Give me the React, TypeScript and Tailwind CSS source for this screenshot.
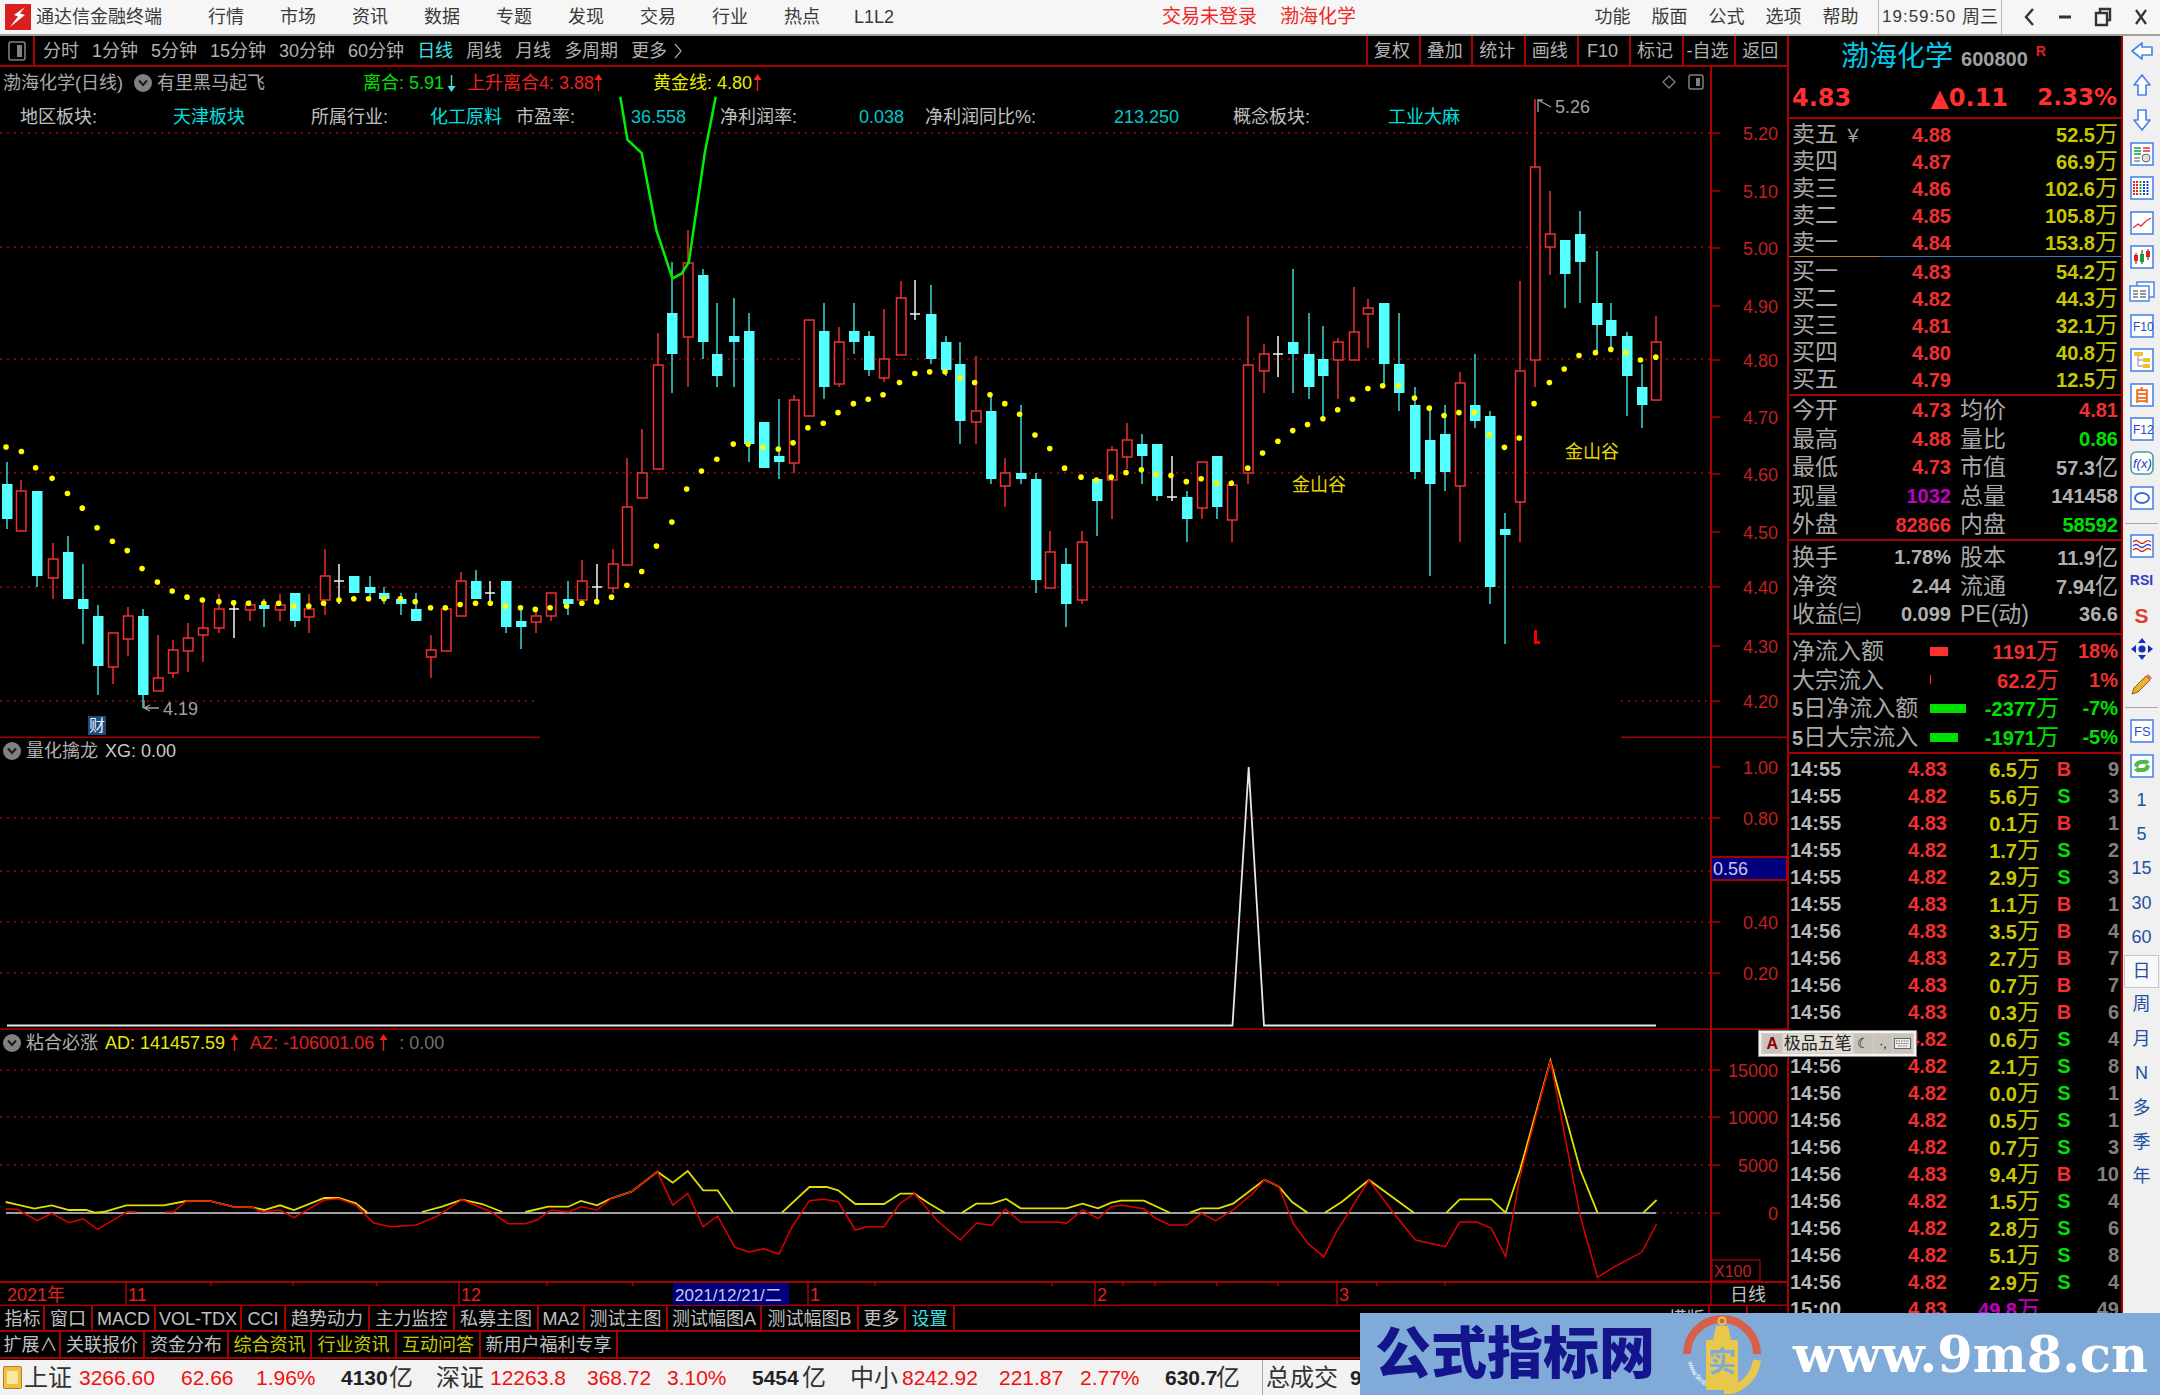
import type { ReactNode } from 'react';

// [x, wick top, body top, body bottom, wick bottom, kind] in crop coordinates
type Candle = [number, number, number, number, number, 'c' | 'r' | 'w'];

const candlesA: Candle[] = [
  [12, 888, 942, 1027, 1052, 'c'], [39, 932, 958, 1055, 1055, 'r'], [67, 957, 957, 1166, 1192, 'c'],
  [97, 1086, 1124, 1170, 1222, 'r'], [124, 1068, 1108, 1222, 1222, 'c'], [152, 1138, 1222, 1247, 1332, 'c'],
  [179, 1237, 1263, 1387, 1457, 'c'], [206, 1307, 1307, 1390, 1431, 'r'], [233, 1241, 1263, 1320, 1361, 'r'],
  [261, 1247, 1263, 1457, 1490, 'c'], [288, 1311, 1417, 1448, 1448, 'r'], [315, 1322, 1348, 1404, 1416, 'r'],
  [343, 1281, 1319, 1349, 1401, 'r'], [370, 1225, 1293, 1310, 1376, 'r'], [400, 1211, 1248, 1294, 1306, 'r'],
  [427, 1225, 1248, 1250, 1317, 'w'], [455, 1225, 1237, 1250, 1276, 'r'], [482, 1222, 1237, 1247, 1291, 'c'],
  [510, 1211, 1237, 1250, 1276, 'r'], [537, 1207, 1207, 1276, 1291, 'c'], [564, 1211, 1248, 1266, 1306, 'r'],
  [592, 1101, 1167, 1225, 1262, 'r'], [619, 1137, 1178, 1180, 1235, 'w'], [646, 1167, 1167, 1207, 1207, 'c'],
  [674, 1167, 1193, 1207, 1225, 'c'], [701, 1193, 1207, 1222, 1235, 'c'], [731, 1207, 1222, 1236, 1262, 'c'],
  [758, 1207, 1248, 1277, 1277, 'c'], [786, 1310, 1347, 1364, 1416, 'r'], [813, 1247, 1247, 1349, 1349, 'r'],
  [840, 1156, 1178, 1265, 1265, 'r'], [868, 1152, 1178, 1222, 1222, 'c'], [894, 1178, 1208, 1210, 1233, 'w'],
  [922, 1178, 1178, 1291, 1306, 'c'], [950, 1240, 1277, 1291, 1346, 'c'], [977, 1241, 1263, 1279, 1306, 'r'],
  [1005, 1208, 1208, 1265, 1276, 'r'], [1035, 1178, 1222, 1236, 1262, 'c'], [1062, 1127, 1178, 1225, 1225, 'r'],
  [1089, 1137, 1193, 1195, 1235, 'w'], [1117, 1101, 1138, 1195, 1207, 'r'], [1144, 877, 998, 1140, 1140, 'r'],
  [1171, 807, 914, 974, 974, 'r'], [1199, 572, 649, 904, 904, 'r'], [1226, 398, 523, 622, 718, 'c'],
  [1254, 318, 399, 581, 703, 'r'], [1281, 414, 428, 593, 634, 'c'], [1308, 497, 622, 677, 703, 'c'],
  [1338, 484, 578, 593, 703, 'c'], [1366, 523, 567, 842, 887, 'c'], [1393, 788, 788, 902, 902, 'c'],
  [1420, 733, 873, 887, 928, 'c'], [1448, 722, 734, 890, 914, 'r'], [1475, 538, 539, 775, 775, 'r'],
  [1502, 497, 567, 703, 733, 'c'], [1530, 557, 594, 695, 703, 'r'], [1557, 497, 567, 593, 622, 'c'],
];

const candlesB: Candle[] = [
  [17, 567, 578, 662, 677, 'c'], [44, 513, 635, 680, 692, 'r'], [74, 443, 485, 625, 625, 'r'],
  [101, 440, 524, 526, 538, 'w'], [129, 454, 524, 634, 648, 'c'], [156, 578, 594, 662, 677, 'c'],
  [183, 594, 648, 787, 842, 'c'], [211, 628, 763, 790, 842, 'r'], [238, 722, 763, 928, 942, 'c'],
  [265, 877, 914, 945, 997, 'r'], [293, 748, 914, 928, 942, 'c'], [320, 914, 928, 1177, 1207, 'c'],
  [347, 1057, 1108, 1195, 1195, 'r'], [375, 1098, 1138, 1236, 1291, 'c'], [405, 1057, 1083, 1224, 1236, 'r'],
  [432, 928, 928, 982, 1067, 'c'], [459, 848, 858, 930, 1027, 'r'], [487, 792, 833, 875, 904, 'r'],
  [514, 818, 844, 872, 942, 'c'], [541, 844, 844, 971, 982, 'c'], [568, 873, 972, 974, 982, 'w'],
  [596, 957, 972, 1027, 1082, 'c'], [623, 888, 888, 1000, 1027, 'r'], [651, 873, 873, 997, 1027, 'c'],
  [678, 932, 944, 1030, 1082, 'r'], [708, 528, 649, 914, 942, 'r'], [736, 597, 623, 665, 718, 'r'],
  [763, 578, 623, 625, 678, 'w'], [790, 414, 594, 622, 718, 'c'], [818, 523, 623, 703, 733, 'c'],
  [845, 553, 634, 677, 787, 'c'], [872, 583, 594, 636, 733, 'r'], [900, 458, 568, 636, 636, 'r'],
  [927, 487, 510, 525, 607, 'r'], [955, 497, 497, 647, 703, 'c'], [982, 523, 648, 718, 762, 'c'],
  [1012, 703, 748, 912, 928, 'c'], [1039, 758, 833, 942, 1167, 'c'], [1066, 748, 818, 912, 957, 'c'],
  [1094, 667, 693, 945, 1082, 'r'], [1121, 622, 748, 787, 803, 'c'], [1149, 763, 774, 1192, 1236, 'c'],
  [1176, 1013, 1052, 1066, 1332, 'c'], [1203, 443, 664, 985, 1082, 'r'], [1231, -3, 165, 636, 703, 'r'],
  [1258, 222, 329, 360, 428, 'r'], [1286, 344, 344, 427, 509, 'c'], [1313, 273, 329, 397, 497, 'c'],
  [1343, 369, 497, 552, 618, 'c'], [1370, 497, 538, 577, 607, 'c'], [1398, 568, 578, 677, 773, 'c'],
  [1425, 648, 703, 747, 803, 'c'], [1452, 528, 594, 735, 735, 'r'],
];

const dotsA = [[11, 850], [39, 861], [65, 901], [95, 927], [123, 964], [150, 1000], [177, 1048], [205, 1081], [232, 1104], [259, 1148], [287, 1181], [314, 1203], [341, 1218], [369, 1225], [399, 1229], [426, 1232], [453, 1233], [481, 1233], [508, 1233], [535, 1240], [563, 1240], [590, 1233], [618, 1225], [645, 1222], [672, 1222], [700, 1222], [730, 1222], [757, 1229], [785, 1244], [812, 1244], [839, 1236], [867, 1233], [894, 1233], [921, 1240], [949, 1244], [976, 1248], [1003, 1244], [1033, 1240], [1061, 1233], [1088, 1229], [1115, 1218], [1143, 1189], [1170, 1155], [1197, 1093], [1225, 1034], [1252, 953], [1279, 909], [1307, 880], [1337, 843], [1364, 843], [1391, 851], [1419, 855], [1446, 840], [1473, 803], [1501, 792], [1528, 766], [1556, 744]];
const dotsB = [[15, 733], [42, 722], [72, 692], [100, 670], [127, 666], [155, 666], [182, 681], [209, 692], [237, 722], [264, 744], [291, 770], [319, 821], [346, 854], [373, 902], [403, 924], [431, 931], [458, 924], [485, 913], [513, 906], [540, 917], [567, 920], [595, 935], [622, 928], [650, 939], [677, 939], [707, 902], [734, 865], [762, 836], [789, 810], [816, 795], [844, 781], [871, 759], [898, 733], [926, 707], [953, 700], [981, 700], [1011, 730], [1038, 755], [1065, 773], [1092, 766], [1120, 766], [1147, 821], [1175, 851], [1202, 828], [1229, 744], [1257, 692], [1284, 659], [1311, 626], [1341, 619], [1369, 611], [1396, 619], [1423, 637], [1451, 630]];

const greenLine = [[1131, -8], [1144, 97], [1170, 130], [1197, 320], [1226, 437], [1243, 425], [1256, 397], [1285, 130], [1305, -8]];

// pane 3 lines, x offset 900 marks the second crop
const yellowA = [
  [[10, 516], [30, 524], [60, 536], [90, 526], [120, 540], [150, 540], [165, 548], [180, 546], [220, 526], [285, 526], [325, 513], [365, 513], [405, 530], [440, 532], [460, 540], [488, 526], [512, 540], [565, 504], [590, 504], [620, 520], [640, 548]],
  [[735, 546], [770, 530], [805, 509], [840, 522], [875, 546]],
  [[915, 546], [955, 530], [990, 530], [1012, 513], [1040, 526], [1065, 505], [1100, 485], [1145, 425], [1172, 458], [1198, 423], [1225, 481], [1250, 481], [1277, 548]],
  [[1362, 548], [1410, 471], [1440, 471], [1460, 481], [1490, 522], [1540, 522], [1568, 491]],
];
const yellowB = [
  [[0, 491], [25, 491], [50, 520], [78, 548]],
  [[108, 548], [133, 521], [160, 521], [185, 507], [210, 535], [290, 535], [318, 521], [345, 535], [368, 518], [385, 512], [425, 512], [470, 548]],
  [[505, 548], [525, 535], [555, 535], [580, 521], [635, 449], [660, 470], [683, 516], [710, 548]],
  [[740, 548], [770, 515], [817, 450], [895, 548]],
  [[952, 548], [975, 508], [1030, 508], [1055, 548], [1080, 420], [1133, 92], [1185, 420], [1215, 548]],
  [[1295, 548], [1318, 510]],
];
const redA = [
  [[10, 536], [30, 538], [65, 572], [90, 550], [120, 578], [145, 566], [170, 598], [205, 562], [222, 545], [238, 546]],
  [[288, 546], [302, 546], [325, 513], [365, 513], [405, 530], [440, 532], [455, 546], [488, 540], [512, 563], [565, 510], [590, 506], [620, 525], [650, 578], [680, 590], [725, 585], [760, 560], [805, 509], [840, 535], [855, 545], [885, 581], [915, 581], [935, 570], [960, 540], [990, 546], [1012, 530], [1040, 540], [1065, 505], [1100, 485], [1145, 425], [1172, 525], [1198, 490], [1225, 590], [1250, 558], [1280, 652], [1305, 666], [1330, 656], [1357, 672], [1380, 590], [1410, 512], [1435, 508], [1460, 515], [1490, 600], [1510, 590], [1540, 590], [1568, 520]],
];
const redB = [[0, 520], [25, 491], [65, 572], [105, 630], [133, 580], [160, 586], [183, 537], [210, 576], [275, 576], [290, 580], [318, 540], [345, 566], [368, 530], [385, 526], [425, 536], [445, 565], [470, 585], [500, 585], [525, 550], [550, 572], [580, 540], [615, 490], [635, 449], [660, 470], [685, 580], [710, 640], [738, 680], [762, 600], [817, 450], [860, 550], [898, 630], [950, 650], [975, 576], [1005, 576], [1030, 595], [1055, 680], [1080, 440], [1133, 92], [1185, 560], [1215, 742], [1245, 710], [1292, 667], [1318, 582]];

const mainX = (x: number, off: number) => off + x / 1.8233;
const mainY = (y: number) => 100 + y / 2.45;
const subX = (x: number, off: number) => off + x / 1.742;
const subY = (y: number) => 1030 + y / 3;
const subPts = (pts: number[][], off: number) => pts.map(([x, y]) => `${subX(x, off).toFixed(1)},${subY(y).toFixed(1)}`).join(' ');

const RED = '#a80000';

function CandleMark({ c, off }: { c: Candle; off: number }) {
  const [x, wt, bt, bb, wb, kind] = c;
  const px = Math.round(mainX(x, off));
  const top = Math.round(mainY(bt));
  const bot = Math.round(mainY(bb));
  const a = Math.round(mainY(wt));
  const b = Math.round(mainY(wb));
  if (kind === 'w') {
    return (
      <g stroke="#f4f4f4" strokeWidth="1.5">
        <line x1={px} x2={px} y1={a} y2={b} />
        <line x1={px - 5} x2={px + 5} y1={top} y2={top} />
      </g>
    );
  }
  if (kind === 'c') {
    return (
      <g>
        <line x1={px} x2={px} y1={a} y2={b} stroke="#3cd8d8" strokeWidth="1.5" />
        <rect x={px - 5} y={top} width="10.5" height={bot - top} fill="#54ffff" />
      </g>
    );
  }
  return (
    <g>
      <line x1={px} x2={px} y1={a} y2={top} stroke="#e83030" strokeWidth="1.5" />
      <line x1={px} x2={px} y1={bot} y2={b} stroke="#e83030" strokeWidth="1.5" />
      <rect x={px - 4.5} y={top} width="9.5" height={bot - top} fill="#000" stroke="#f03030" strokeWidth="1.5" />
    </g>
  );
}

function Grid({ ys, x2 = 1711 }: { ys: number[]; x2?: number }) {
  return (
    <g stroke={RED} strokeWidth="1.5" strokeDasharray="2 5">
      {ys.map((y) => (
        <line key={y} x1="0" x2={x2} y1={y} y2={y} />
      ))}
    </g>
  );
}

function AxisLabels({ items, x = 1778 }: { items: [string, number][]; x?: number }) {
  return (
    <g fill="#c02020" fontSize="18" textAnchor="end">
      {items.map(([t, y]) => (
        <g key={t}>
          <line x1="1711" x2="1720" y1={y} y2={y} stroke={RED} strokeWidth="1.5" />
          <text x={x} y={y + 7}>{t}</text>
        </g>
      ))}
    </g>
  );
}

function Chevron() {
  return (
    <span className="flex h-[18px] w-[18px] items-center justify-center rounded-full bg-[#808080]">
      <svg width="10" height="8" viewBox="0 0 10 8"><path d="M1 1.5 5 6l4-4.5" fill="none" stroke="#1a1a1a" strokeWidth="2" /></svg>
    </span>
  );
}

function Tick({ dir, color }: { dir: 'up' | 'down'; color: string }) {
  return (
    <svg width="9" height="18" viewBox="0 0 9 18" className="flex-none">
      <path d={dir === 'up' ? 'M4.5 17V4' : 'M4.5 1v13'} stroke={color} strokeWidth="1.4" />
      <path d={dir === 'up' ? 'M4.5 0 8.5 6h-8z' : 'M4.5 18 .5 12h8z'} fill={color} />
    </svg>
  );
}

function PriceChart() {
  const axis: [string, number][] = [['5.20', 133], ['5.10', 191], ['5.00', 248], ['4.90', 306], ['4.80', 360], ['4.70', 417], ['4.60', 474], ['4.50', 532], ['4.40', 587], ['4.30', 646], ['4.20', 701]];
  return (
    <div className="relative h-[671px] w-full">
      <svg className="block" width="1787" height="671" viewBox="0 67 1787 671">
        <Grid ys={[133, 247, 359, 473, 587]} />
        <line x1="0" x2="537" y1="701" y2="701" stroke={RED} strokeWidth="1.5" strokeDasharray="2 5" />
        <line x1="1621" x2="1711" y1="701" y2="701" stroke={RED} strokeWidth="1.5" strokeDasharray="2 5" />
        <line x1="1711" x2="1711" y1="67" y2="738" stroke={RED} strokeWidth="2" />
        <AxisLabels items={axis} />
        {candlesA.map((c) => <CandleMark key={`a${c[0]}`} c={c} off={0} />)}
        {candlesB.map((c) => <CandleMark key={`b${c[0]}`} c={c} off={860} />)}
        <g fill="#ffff00">
          {dotsA.map(([x, y]) => <circle key={`a${x}`} cx={mainX(x, 0)} cy={mainY(y)} r="2.8" />)}
          {dotsB.map(([x, y]) => <circle key={`b${x}`} cx={mainX(x, 860)} cy={mainY(y)} r="2.8" />)}
        </g>
        <polyline points={greenLine.map(([x, y]) => `${mainX(x, 0)},${mainY(y)}`).join(' ')} fill="none" stroke="#00f000" strokeWidth="2.5" />
        <path d="M1538 112V100l13 7M1538 100h5" fill="none" stroke="#a0a0a0" strokeWidth="1.3" />
        <text x="1555" y="113" fill="#a0a0a0" fontSize="18">5.26</text>
        <path d="M144 700v8h15M144 708l6-3M144 708l6 3" fill="none" stroke="#a0a0a0" strokeWidth="1.3" />
        <text x="163" y="715" fill="#a0a0a0" fontSize="18">4.19</text>
        <rect x="88" y="716" width="18" height="19" fill="#1a4a80" />
        <text x="89" y="731" fill="#f0f0f0" fontSize="16">财</text>
        <text x="1292" y="491" fill="#e8d800" fontSize="18">金山谷</text>
        <text x="1565" y="458" fill="#e8d800" fontSize="18">金山谷</text>
        <path d="M1534 630h3v11h3v3h-6z" fill="#f00000" />
        <path d="M1669 76l6 6-6 6-6-6z" fill="none" stroke="#808080" strokeWidth="1.3" />
        <rect x="1689" y="75" width="14" height="14" rx="2" fill="none" stroke="#808080" strokeWidth="1.5" />
        <rect x="1696" y="78" width="4" height="8" fill="#808080" />
        <line x1="0" x2="540" y1="737.5" y2="737.5" stroke={RED} strokeWidth="2" />
        <line x1="1621" x2="1787" y1="737.5" y2="737.5" stroke={RED} strokeWidth="2" />
      </svg>

      <div className="absolute left-[3px] top-[4px] flex h-[24px] items-center whitespace-nowrap text-[18px] text-[#a8a8a8]">
        <span className="w-[131px]">渤海化学(日线)</span>
        <Chevron />
        <span className="ml-[5px] w-[206px]">有里黑马起飞</span>
        <span className="w-[84px] text-[#00e000]">离合: 5.91</span>
        <Tick dir="down" color="#40e0e0" />
        <span className="ml-[11px] w-[127px] text-[#f02020]">上升离合4: 3.88</span>
        <Tick dir="up" color="#f02020" />
        <span className="ml-[50px] w-[100px] text-[#e8e800]">黄金线: 4.80</span>
        <Tick dir="up" color="#f02020" />
      </div>

      <div className="absolute left-[20px] top-[38px] flex h-[24px] items-center whitespace-nowrap text-[18px] text-[#c0c0c0]">
        <span className="w-[153px]">地区板块:</span>
        <span className="w-[138px] text-[#00e0e0]">天津板块</span>
        <span className="w-[119px]">所属行业:</span>
        <span className="w-[86px] text-[#00e0e0]">化工原料</span>
        <span className="w-[115px]">市盈率:</span>
        <span className="w-[89px] text-[#00c8c8]">36.558</span>
        <span className="w-[139px]">净利润率:</span>
        <span className="w-[66px] text-[#00c8c8]">0.038</span>
        <span className="w-[189px]">净利润同比%:</span>
        <span className="w-[119px] text-[#00c8c8]">213.250</span>
        <span className="w-[155px]">概念板块:</span>
        <span className="text-[#00e0e0]">工业大麻</span>
      </div>
    </div>
  );
}

function SignalChart() {
  const axis: [string, number][] = [['1.00', 767], ['0.80', 818], ['0.40', 922], ['0.20', 973]];
  return (
    <div className="relative h-[292px] w-full">
      <svg className="block" width="1787" height="292" viewBox="0 738 1787 292">
        <Grid ys={[818, 871, 922, 973]} />
        <line x1="1711" x2="1711" y1="738" y2="1030" stroke={RED} strokeWidth="2" />
        <AxisLabels items={axis} />
        <polyline points="7,1025.5 1232.5,1025.5 1248.7,767 1264,1025.5 1656,1025.5" fill="none" stroke="#e8e8e8" strokeWidth="1.8" />
        <rect x="1711" y="857" width="76" height="23" fill="#00007f" stroke={RED} strokeWidth="2" />
        <text x="1713" y="875" fill="#c8c8e8" fontSize="18">0.56</text>
        <line x1="0" x2="1787" y1="1029.5" y2="1029.5" stroke={RED} strokeWidth="2" />
      </svg>
      <div className="absolute left-[3px] top-[2px] flex h-[22px] items-center gap-[5px] whitespace-nowrap text-[18px] text-[#b0b0b0]">
        <Chevron />
        <span>量化擒龙</span>
        <span className="ml-[2px] text-[#c8c8c8]">XG: 0.00</span>
      </div>
    </div>
  );
}

function OscChart() {
  const axis: [string, number][] = [['15000', 1070], ['10000', 1117], ['5000', 1165], ['0', 1213]];
  return (
    <div className="relative h-[251px] w-full">
      <svg className="block" width="1787" height="251" viewBox="0 1030 1787 251">
        <Grid ys={[1070, 1117, 1165]} />
        <line x1="1656" x2="1711" y1="1213" y2="1213" stroke={RED} strokeWidth="1.5" strokeDasharray="2 5" />
        <line x1="1711" x2="1711" y1="1030" y2="1281" stroke={RED} strokeWidth="2" />
        <AxisLabels items={axis} />
        <rect x="1712" y="1260" width="48" height="21" fill="none" stroke={RED} strokeWidth="1.3" />
        <text x="1714" y="1277" fill="#c02020" fontSize="16">X100</text>
        <line x1="6" x2="1656" y1="1213" y2="1213" stroke="#a0a0a0" strokeWidth="1.8" />
        <g fill="none" stroke="#e0e000" strokeWidth="1.8">
          {yellowA.map((p, i) => <polyline key={`ya${i}`} points={subPts(p, 0)} />)}
          {yellowB.map((p, i) => <polyline key={`yb${i}`} points={subPts(p, 900)} />)}
        </g>
        <g fill="none" stroke="#e00000" strokeWidth="1.5">
          {redA.map((p, i) => <polyline key={`ra${i}`} points={subPts(p, 0)} />)}
          <polyline points={subPts(redB, 900)} />
        </g>
      </svg>
      <div className="absolute left-[3px] top-[2px] flex h-[22px] items-center gap-[5px] whitespace-nowrap text-[18px] text-[#b0b0b0]">
        <Chevron />
        <span>粘合必涨</span>
        <span className="ml-[2px] text-[#e8e800]">AD: 141457.59</span>
        <Tick dir="up" color="#f02020" />
        <span className="ml-[6px] text-[#e02020]">AZ: -106001.06</span>
        <Tick dir="up" color="#f02020" />
        <span className="ml-[6px] text-[#707070]">: 0.00</span>
      </div>
    </div>
  );
}

function TimeAxis() {
  const minor = [211, 293, 377, 547, 633, 875, 1052, 1123, 1155, 1217, 1278, 1377, 1445];
  return (
    <svg className="block" width="1787" height="25" viewBox="0 1281 1787 25">
      <line x1="0" x2="1787" y1="1282" y2="1282" stroke={RED} strokeWidth="2" />
      <line x1="0" x2="1787" y1="1305.5" y2="1305.5" stroke={RED} strokeWidth="2" />
      <g stroke={RED} strokeWidth="1.5">
        {[126, 459, 808, 1095, 1337, 1711].map((x) => <line key={x} x1={x} x2={x} y1="1282" y2="1305" />)}
        {minor.map((x) => <line key={x} x1={x} x2={x} y1="1282" y2="1286" />)}
      </g>
      <g fill="#e02020" fontSize="18">
        <text x="7" y="1301">2021年</text>
        <text x="128" y="1301">11</text>
        <text x="461" y="1301">12</text>
        <text x="810" y="1301">1</text>
        <text x="1097" y="1301">2</text>
        <text x="1339" y="1301">3</text>
      </g>
      <rect x="673" y="1283" width="116" height="22" fill="#00007f" />
      <text x="675" y="1301" fill="#c8c8e8" fontSize="17">2021/12/21/二</text>
      <text x="1730" y="1301" fill="#c0c0c0" fontSize="18">日线</text>
    </svg>
  );
}

function Tab({ w, children, tone = 'text-[#c0c0c0]' }: { w: string; children: ReactNode; tone?: string }) {
  return (
    <div className={`flex h-full items-center justify-center whitespace-nowrap border-r-2 border-[#a80000] pt-[2px] ${w} ${tone}`}>
      {children}
    </div>
  );
}

function TabRows() {
  return (
    <div className="flex flex-col text-[18px]">
      <div className="flex h-[26px] border-b-2 border-[#a80000] pl-[2px]">
        <Tab w="w-[43px]">指标</Tab>
        <Tab w="w-[48px]">窗口</Tab>
        <Tab w="w-[63px]">MACD</Tab>
        <Tab w="w-[86px]">VOL-TDX</Tab>
        <Tab w="w-[44px]">CCI</Tab>
        <Tab w="w-[84px]">趋势动力</Tab>
        <Tab w="w-[85px]">主力监控</Tab>
        <Tab w="w-[84px]">私募主图</Tab>
        <Tab w="w-[46px]">MA2</Tab>
        <Tab w="w-[83px]">测试主图</Tab>
        <Tab w="w-[94px]">测试幅图A</Tab>
        <Tab w="w-[97px]">测试幅图B</Tab>
        <Tab w="w-[47px]">更多</Tab>
        <Tab w="w-[49px]" tone="text-[#40e0e0]">设置</Tab>
        <div className="ml-auto flex">
          <Tab w="w-[45px]">模版</Tab>
          <Tab w="w-[38px]">+</Tab>
          <div className="w-[39px]" />
        </div>
      </div>
      <div className="flex h-[27px] border-b-2 border-[#a80000] pl-[2px]">
        <Tab w="w-[59px]">扩展∧</Tab>
        <Tab w="w-[84px]">关联报价</Tab>
        <Tab w="w-[84px]">资金分布</Tab>
        <Tab w="w-[83px]" tone="text-[#c8c800]">综合资讯</Tab>
        <Tab w="w-[85px]" tone="text-[#c8c800]">行业资讯</Tab>
        <Tab w="w-[84px]" tone="text-[#c8c800]">互动问答</Tab>
        <Tab w="w-[137px]">新用户福利专享</Tab>
      </div>
    </div>
  );
}

function BookRow({ label, price, qty, extra }: { label: string; price: string; qty: string; extra?: string }) {
  return (
    <div className="flex h-[27px] items-center whitespace-nowrap">
      <span className="w-[76px] text-[23px] text-[#a8a8a8]">
        {label}
        {extra && <span className="ml-[6px] text-[18px]">{extra}</span>}
      </span>
      <span className="w-[83px] text-right text-[20px] font-bold text-[#f03030]">{price}</span>
      <span className="flex-1 text-right text-[20px] font-bold text-[#c8c800]">
        {qty}
        <span className="text-[23px] font-normal">万</span>
      </span>
    </div>
  );
}

function StatRow({ a, av, at, b, bv, bt }: { a: string; av: string; at: string; b: string; bv: ReactNode; bt: string }) {
  return (
    <div className="flex h-[28.6px] items-center whitespace-nowrap">
      <span className="w-[76px] text-[23px] text-[#a8a8a8]">{a}</span>
      <span className={`w-[83px] text-right text-[20px] font-bold ${at}`}>{av}</span>
      <span className="ml-[9px] w-[72px] text-[23px] text-[#a8a8a8]">{b}</span>
      <span className={`flex-1 text-right text-[20px] font-bold ${bt}`}>{bv}</span>
    </div>
  );
}

const Yi = ({ v }: { v: string }) => (
  <>
    {v}
    <span className="text-[23px] font-normal">亿</span>
  </>
);

function FlowRow({ label, bar, barTone, val, pct, tone }: { label: ReactNode; bar: string; barTone: string; val: string; pct: string; tone: string }) {
  return (
    <div className="flex h-[28.7px] items-center whitespace-nowrap">
      <span className="w-[138px] text-[23px] text-[#a8a8a8]">{label}</span>
      <span className="w-[40px]"><span className={`block h-[9px] ${bar} ${barTone}`} /></span>
      <span className={`w-[89px] text-right text-[20px] font-bold ${tone}`}>
        {val}
        <span className="text-[23px] font-normal">万</span>
      </span>
      <span className={`flex-1 text-right text-[20px] font-bold ${tone}`}>{pct}</span>
    </div>
  );
}

const ticks: [string, string, string, string, string][] = [
  ['14:55', '4.83', '6.5', 'B', '9'], ['14:55', '4.82', '5.6', 'S', '3'], ['14:55', '4.83', '0.1', 'B', '1'],
  ['14:55', '4.82', '1.7', 'S', '2'], ['14:55', '4.82', '2.9', 'S', '3'], ['14:55', '4.83', '1.1', 'B', '1'],
  ['14:56', '4.83', '3.5', 'B', '4'], ['14:56', '4.83', '2.7', 'B', '7'], ['14:56', '4.83', '0.7', 'B', '7'],
  ['14:56', '4.83', '0.3', 'B', '6'], ['14:56', '4.82', '0.6', 'S', '4'], ['14:56', '4.82', '2.1', 'S', '8'],
  ['14:56', '4.82', '0.0', 'S', '1'], ['14:56', '4.82', '0.5', 'S', '1'], ['14:56', '4.82', '0.7', 'S', '3'],
  ['14:56', '4.83', '9.4', 'B', '10'], ['14:56', '4.82', '1.5', 'S', '4'], ['14:56', '4.82', '2.8', 'S', '6'],
  ['14:56', '4.82', '5.1', 'S', '8'], ['14:56', '4.82', '2.9', 'S', '4'], ['15:00', '4.83', '49.8', '', '49'],
];

function QuotePanel() {
  return (
    <div className="flex h-full w-[336px] flex-col overflow-hidden border-x-2 border-[#a80000] bg-black">
      <div className="flex h-[42px] items-center whitespace-nowrap pl-[52px]">
        <span className="text-[28px] leading-none text-[#00c8e8]">渤海化学</span>
        <span className="ml-[8px] mt-[4px] text-[20px] font-bold text-[#a0a0a0]">600800</span>
        <span className="mb-[12px] ml-[8px] text-[14px] font-bold text-[#e02020]">R</span>
      </div>
      <div className="flex h-[41px] items-center justify-between whitespace-nowrap border-b-2 border-[#a80000] pl-[3px] pr-[4px] font-['DejaVu_Sans'] text-[24px] font-bold text-[#ff3030]">
        <span>4.83</span>
        <span className="ml-[50px]">▲0.11</span>
        <span className="text-[23px]">2.33%</span>
      </div>
      <div className="px-[3px] pt-[2px]">
        <BookRow label="卖五" extra="￥" price="4.88" qty="52.5" />
        <BookRow label="卖四" price="4.87" qty="66.9" />
        <BookRow label="卖三" price="4.86" qty="102.6" />
        <BookRow label="卖二" price="4.85" qty="105.8" />
        <BookRow label="卖一" price="4.84" qty="153.8" />
      </div>
      <div className="flex h-px flex-none">
        <span className="w-[92px] bg-[#b08020]" />
        <span className="flex-1 bg-[#3080c0]" />
      </div>
      <div className="border-b-2 border-[#a80000] px-[3px] pb-px pt-px">
        <BookRow label="买一" price="4.83" qty="54.2" />
        <BookRow label="买二" price="4.82" qty="44.3" />
        <BookRow label="买三" price="4.81" qty="32.1" />
        <BookRow label="买四" price="4.80" qty="40.8" />
        <BookRow label="买五" price="4.79" qty="12.5" />
      </div>
      <div className="border-b-2 border-[#a80000] px-[3px]">
        <StatRow a="今开" av="4.73" at="text-[#f03030]" b="均价" bv="4.81" bt="text-[#f03030]" />
        <StatRow a="最高" av="4.88" at="text-[#f03030]" b="量比" bv="0.86" bt="text-[#00e000]" />
        <StatRow a="最低" av="4.73" at="text-[#f03030]" b="市值" bv={<Yi v="57.3" />} bt="text-[#b0b0b0]" />
        <StatRow a="现量" av="1032" at="text-[#c000c0]" b="总量" bv="141458" bt="text-[#b0b0b0]" />
        <StatRow a="外盘" av="82866" at="text-[#f03030]" b="内盘" bv="58592" bt="text-[#00e000]" />
      </div>
      <div className="border-b-2 border-[#a80000] px-[3px] pb-[4px] pt-[2px]">
        <StatRow a="换手" av="1.78%" at="text-[#b0b0b0]" b="股本" bv={<Yi v="11.9" />} bt="text-[#b0b0b0]" />
        <StatRow a="净资" av="2.44" at="text-[#b0b0b0]" b="流通" bv={<Yi v="7.94" />} bt="text-[#b0b0b0]" />
        <StatRow a="收益㈢" av="0.099" at="text-[#b0b0b0]" b="PE(动)" bv="36.6" bt="text-[#b0b0b0]" />
      </div>
      <div className="border-b-2 border-[#a80000] px-[3px] pt-[2px]">
        <FlowRow label="净流入额" bar="w-[18px]" barTone="bg-[#ff3030]" val="1191" pct="18%" tone="text-[#f03030]" />
        <FlowRow label="大宗流入" bar="w-px" barTone="bg-[#ff3030]" val="62.2" pct="1%" tone="text-[#f03030]" />
        <FlowRow label={<><b className="text-[20px] text-[#b0b0b0]">5</b>日净流入额</>} bar="w-[36px]" barTone="bg-[#00e000]" val="-2377" pct="-7%" tone="text-[#00e000]" />
        <FlowRow label={<><b className="text-[20px] text-[#b0b0b0]">5</b>日大宗流入</>} bar="w-[28px]" barTone="bg-[#00e000]" val="-1971" pct="-5%" tone="text-[#00e000]" />
      </div>
      <div className="flex-1 pl-px pt-[2px]">
        {ticks.map(([t, p, v, s, n], i) => (
          <div key={`${t}${i}`} className="flex h-[27px] items-center whitespace-nowrap text-[20px] font-bold">
            <span className="w-[60px] text-[#b8b8b8]">{t}</span>
            <span className="w-[97px] text-right text-[#f03030]">{p}</span>
            <span className={`w-[93px] text-right ${i === 20 ? 'text-[#c000c0]' : 'text-[#c8c800]'}`}>
              {v}
              <span className="text-[23px] font-normal">万</span>
            </span>
            <span className={`w-[48px] text-center ${s === 'B' ? 'text-[#f03030]' : 'text-[#00e000]'}`}>{s}</span>
            <span className="w-[31px] text-right text-[#808080]">{n}</span>
          </div>
        ))}
      </div>
    </div>
  );
}

function Box({ children }: { children: ReactNode }) {
  return (
    <svg width="24" height="24" viewBox="0 0 24 24">
      <rect x="1" y="1" width="22" height="22" fill="#fff" stroke="#4a86e8" strokeWidth="1.6" />
      {children}
    </svg>
  );
}

function Arrow({ d }: { d: string }) {
  return (
    <svg width="24" height="24" viewBox="0 0 24 24">
      <path d={d} fill="#fff" stroke="#4a86e8" strokeWidth="1.7" strokeLinejoin="round" />
    </svg>
  );
}

function Slot({ children, h = 'h-[34.4px]', extra = '' }: { children: ReactNode; h?: string; extra?: string }) {
  return <div className={`flex flex-none items-center justify-center ${h} ${extra}`}>{children}</div>;
}

function SideNum({ children }: { children: ReactNode }) {
  return <Slot><span className="text-[18px] text-[#1f4fa0]">{children}</span></Slot>;
}

function SideBar() {
  return (
    <div className="flex h-full w-[37px] flex-col overflow-hidden bg-[#f0f0f0]">
      <Slot h="h-[30px]"><Arrow d="M2 12 12 4v4h10v8H12v4z" /></Slot>
      <Slot extra="mt-[2px]"><Arrow d="M12 2l8 10h-4v10H8V12H4z" /></Slot>
      <Slot><Arrow d="M12 22l8-10h-4V2H8v10H4z" /></Slot>
      <Slot>
        <Box>
          <path d="M4 6h7M4 9h7M4 12h7" stroke="#10a040" strokeWidth="1.6" />
          <path d="M13 6h7M13 9h7" stroke="#e03030" strokeWidth="1.6" />
          <circle cx="16" cy="16" r="4" fill="#ddd" stroke="#666" />
          <path d="M4 16h6M4 19h6" stroke="#888" strokeWidth="1.5" />
        </Box>
      </Slot>
      <Slot>
        <Box>
          <path d="M4 5v14M7 5v14" stroke="#e02020" strokeWidth="2" strokeDasharray="2 1" />
          <path d="M10.5 5v14" stroke="#10a040" strokeWidth="2" strokeDasharray="2 1" />
          <path d="M14 5v14M17.5 5v14" stroke="#2040d0" strokeWidth="2" strokeDasharray="2 1" />
        </Box>
      </Slot>
      <Slot>
        <Box><path d="M3 17l5-4 3 2 5-5 5-3" fill="none" stroke="#e03040" strokeWidth="1.4" /></Box>
      </Slot>
      <Slot>
        <Box>
          <path d="M6 8v11M12 5v14M18 4v11" stroke="#222" strokeWidth="1" />
          <rect x="4" y="10" width="4" height="6" fill="#e02020" />
          <rect x="10" y="9" width="4" height="8" fill="#10a040" />
          <rect x="16" y="6" width="4" height="6" fill="#e02020" />
        </Box>
      </Slot>
      <Slot>
        <svg width="26" height="24" viewBox="0 0 26 24">
          <rect x="8" y="2" width="17" height="15" fill="#fff" stroke="#4a86e8" strokeWidth="1.5" />
          <rect x="1" y="6" width="19" height="15" fill="#fff" stroke="#4a86e8" strokeWidth="1.5" />
          <path d="M4 11h5M11 11h6M4 14h5M11 14h6M4 17h5M11 17h6" stroke="#777" strokeWidth="1.5" />
        </svg>
      </Slot>
      <Slot>
        <Box><text x="3" y="17" fontSize="12" fill="#1f4fc0">F10</text></Box>
      </Slot>
      <Slot>
        <Box>
          <path d="M8 8v10M8 12h5M8 18h5" stroke="#888" fill="none" />
          <rect x="4" y="4" width="9" height="4" fill="#f0c030" />
          <rect x="13" y="10" width="7" height="4" fill="#f0c030" />
          <rect x="13" y="16" width="7" height="4" fill="#f0c030" />
        </Box>
      </Slot>
      <Slot>
        <Box><text x="4" y="18" fontSize="16" fill="#f07020" fontWeight="700">自</text></Box>
      </Slot>
      <Slot>
        <Box><text x="3" y="17" fontSize="12" fill="#1f4fc0">F12</text></Box>
      </Slot>
      <Slot>
        <svg width="24" height="24" viewBox="0 0 24 24">
          <rect x="1" y="1" width="22" height="22" rx="5" fill="#fff" stroke="#40a0a0" strokeWidth="1.6" />
          <text x="3" y="17" fontSize="13" fill="#2040c0" fontStyle="italic">f(x)</text>
        </svg>
      </Slot>
      <Slot>
        <Box><ellipse cx="12" cy="12" rx="7" ry="5" fill="none" stroke="#2f6fd0" strokeWidth="2" /></Box>
      </Slot>
      <div className="mx-[2px] mt-[8px] h-px flex-none bg-[#a8a8a8]" />
      <Slot extra="mt-[5px]">
        <Box>
          <path d="M3 8q3-3 6 0t6 0 6 0" fill="none" stroke="#e02020" strokeWidth="1.2" />
          <path d="M3 12q3-3 6 0t6 0 6 0" fill="none" stroke="#2040d0" strokeWidth="1.2" />
          <path d="M3 16q3-3 6 0t6 0 6 0" fill="none" stroke="#e02020" strokeWidth="1.2" />
        </Box>
      </Slot>
      <Slot><span className="text-[14px] font-bold text-[#3040c0]">RSI</span></Slot>
      <Slot><span className="text-[21px] font-bold leading-none text-[#d84030]">S</span></Slot>
      <Slot>
        <svg width="24" height="24" viewBox="0 0 24 24" fill="#1030c0">
          <path d="M12 1l4 5h-8zM12 23l-4-5h8zM1 12l5-4v8zM23 12l-5 4V8z" />
          <circle cx="12" cy="12" r="3.5" />
        </svg>
      </Slot>
      <Slot>
        <svg width="24" height="24" viewBox="0 0 24 24">
          <path d="M2 22l2-6L16 4l4 4L8 20z" fill="#f0b030" stroke="#806020" />
          <path d="M16 4l2-2 4 4-2 2z" fill="#e07070" />
        </svg>
      </Slot>
      <div className="mx-[2px] mt-[6px] h-px flex-none bg-[#a8a8a8]" />
      <Slot extra="mt-[6px]">
        <Box><text x="4" y="17" fontSize="13" fill="#1f4fc0">FS</text></Box>
      </Slot>
      <Slot>
        <Box><path d="M4 12q1-6 8-6l4 0-2-2 6 4-6 4 2-2h-4q-4 0-4 4zM20 12q-1 6-8 6H8l2 2-6-4 6-4-2 2h4q4 0 4-4z" fill="#50b850" /></Box>
      </Slot>
      <SideNum>1</SideNum>
      <SideNum>5</SideNum>
      <SideNum>15</SideNum>
      <SideNum>30</SideNum>
      <SideNum>60</SideNum>
      <Slot h="h-[33px]" extra="border border-[#c8c8c8] bg-[#f8f8f8] mx-px">
        <span className="text-[18px] text-[#1f4fa0]">日</span>
      </Slot>
      <SideNum>周</SideNum>
      <SideNum>月</SideNum>
      <SideNum>N</SideNum>
      <SideNum>多</SideNum>
      <SideNum>季</SideNum>
      <SideNum>年</SideNum>
    </div>
  );
}

function TitleBar() {
  const menus = ['行情', '市场', '资讯', '数据', '专题', '发现', '交易', '行业', '热点', 'L1L2'];
  const right = ['功能', '版面', '公式', '选项', '帮助'];
  return (
    <div className="flex h-[36px] flex-none items-center border-b-2 border-[#a0a0a0] bg-[#f6f6f6] text-[18px] text-[#3a3a3a]">
      <div className="ml-[5px] flex h-[26px] w-[26px] flex-none items-center justify-center bg-[#d82020]">
        <svg width="22" height="22" viewBox="0 0 22 22"><path d="M18 1 7 9l4 1.5L3 21l15-12-5-1.5z" fill="#fff" /></svg>
      </div>
      <span className="ml-[5px] w-[154px] whitespace-nowrap">通达信金融终端</span>
      <div className="flex">
        {menus.map((m) => <span key={m} className="w-[72px] whitespace-nowrap text-center">{m}</span>)}
      </div>
      <span className="ml-[252px] w-[118px] whitespace-nowrap text-[19px] text-[#f02828]">交易未登录</span>
      <span className="whitespace-nowrap text-[19px] text-[#f02828]">渤海化学</span>
      <div className="ml-[228px] flex">
        {right.map((m) => <span key={m} className="w-[57px] whitespace-nowrap text-center">{m}</span>)}
      </div>
      <div className="ml-[9px] flex h-[34px] w-[124px] flex-none items-center whitespace-nowrap border-x border-[#b8b8b8] pl-[3px]">
        <span className="w-[80px] text-[17px] tracking-[1px]">19:59:50</span>
        <span>周三</span>
      </div>
      <div className="flex flex-1 items-center justify-between pl-[20px] pr-[12px] text-[#333]">
        <svg width="14" height="20" viewBox="0 0 14 20"><path d="M11 2 4 10l7 8" fill="none" stroke="#333" strokeWidth="2.4" /></svg>
        <svg width="14" height="20" viewBox="0 0 14 20"><path d="M1 10h12" stroke="#333" strokeWidth="3" /></svg>
        <svg width="18" height="20" viewBox="0 0 18 20"><path d="M6 5V2h10v11h-3M2 6h11v12H2z" fill="none" stroke="#333" strokeWidth="2.4" /></svg>
        <svg width="14" height="20" viewBox="0 0 14 20"><path d="M2 3l10 14M12 3 2 17" stroke="#333" strokeWidth="2.2" /></svg>
      </div>
    </div>
  );
}

function ToolRow() {
  const periods = ['分时', '1分钟', '5分钟', '15分钟', '30分钟', '60分钟'];
  const tools = ['复权', '叠加', '统计', '画线', 'F10', '标记', '-自选', '返回'];
  return (
    <div className="flex h-[31px] flex-none items-center border-b-2 border-[#a80000] text-[18px] text-[#b0b0b0]">
      <div className="flex h-full w-[35px] flex-none items-center justify-center border-r-2 border-[#a80000]">
        <svg width="18" height="20" viewBox="0 0 18 20">
          <rect x="1" y="1" width="16" height="18" rx="2" fill="none" stroke="#808080" strokeWidth="1.6" />
          <rect x="9" y="4" width="5" height="12" fill="#808080" />
        </svg>
      </div>
      <div className="ml-[8px] flex items-center gap-[13px] whitespace-nowrap pt-px">
        {periods.map((p) => <span key={p}>{p}</span>)}
        <span className="text-[#40e0e0]">日线</span>
        <span>周线</span>
        <span>月线</span>
        <span>多周期</span>
        <span>更多</span>
        <svg width="9" height="18" viewBox="0 0 9 18" className="-ml-[6px]"><path d="M1 2l6 7-6 7" fill="none" stroke="#a0a0a0" strokeWidth="1.3" /></svg>
      </div>
      <div className="ml-auto flex h-full">
        {tools.map((t) => (
          <span key={t} className="flex w-[52.6px] items-center justify-center whitespace-nowrap border-l-2 border-[#a80000] pr-[3px] pt-px">{t}</span>
        ))}
      </div>
    </div>
  );
}

type Seg = { w: string; t: string; c: string };

function StatusBar() {
  const red = 'text-[21px] text-[#f01010]';
  const dark = 'text-[21px] font-bold text-[#222]';
  const zh = 'text-[24px] text-[#333]';
  const segs: Seg[] = [
    { w: 'w-[55px]', t: '上证', c: zh },
    { w: 'w-[102px]', t: '3266.60', c: red },
    { w: 'w-[75px]', t: '62.66', c: red },
    { w: 'w-[85px]', t: '1.96%', c: red },
    { w: 'w-[48px]', t: '4130', c: dark },
    { w: 'w-[47px]', t: '亿', c: zh },
    { w: 'w-[54px]', t: '深证', c: zh },
    { w: 'w-[97px]', t: '12263.8', c: red },
    { w: 'w-[80px]', t: '368.72', c: red },
    { w: 'w-[85px]', t: '3.10%', c: red },
    { w: 'w-[50px]', t: '5454', c: dark },
    { w: 'w-[48px]', t: '亿', c: zh },
    { w: 'w-[52px]', t: '中小', c: zh },
    { w: 'w-[97px]', t: '8242.92', c: red },
    { w: 'w-[81px]', t: '221.87', c: red },
    { w: 'w-[85px]', t: '2.77%', c: red },
    { w: 'w-[51px]', t: '630.7', c: dark },
    { w: 'w-[46px]', t: '亿', c: zh },
  ];
  return (
    <div className="flex h-[35px] flex-none items-center whitespace-nowrap bg-[#f2f2f2]">
      <div className="ml-[3px] mr-[2px] flex h-[23px] w-[19px] flex-none items-center justify-center rounded-[2px] border border-[#b08020] bg-[#f0c040]">
        <span className="h-[13px] w-[11px] bg-[#f8e8a0]" />
      </div>
      {segs.map((s, i) => <span key={i} className={`${s.w} ${s.c}`}>{s.t}</span>)}
      <span className="flex h-full items-center border-l border-[#a8a8a8] pl-[3px] text-[24px] text-[#333]">总成交</span>
      <span className="ml-[12px] text-[21px] font-bold text-[#222]">9</span>
    </div>
  );
}

function ImeBar() {
  return (
    <div className="absolute left-[1759px] top-[1031px] flex h-[25px] w-[157px] items-center gap-px border-2 border-[#f4f4f0] bg-[#d4d0c8] px-[2px] outline outline-1 outline-[#888]">
      <span className="flex h-[19px] w-[19px] items-center justify-center bg-[#c8c4bc] text-[16px] font-bold text-[#900000]">A</span>
      <span className="flex h-[19px] w-[71px] items-center justify-center bg-[#e0dcd4] text-[17px] text-[#222]">极品五笔</span>
      <span className="flex h-[19px] w-[19px] items-center justify-center bg-[#c8c4bc] text-[14px] text-[#111]">☾</span>
      <span className="flex h-[19px] w-[19px] items-center justify-center bg-[#c8c4bc] text-[12px] text-[#111]">·,</span>
      <span className="flex h-[19px] w-[19px] items-center justify-center bg-[#c8c4bc]">
        <svg width="17" height="11" viewBox="0 0 17 11"><rect x="0.5" y="0.5" width="16" height="10" fill="#eee" stroke="#666" /><path d="M2 3h13M2 5.5h13M4 8h9" stroke="#666" strokeDasharray="1.5 1" /></svg>
      </span>
    </div>
  );
}

function Watermark() {
  return (
    <div className="absolute bottom-0 left-[1360px] right-0 flex h-[82px] items-center whitespace-nowrap bg-[#80aad8]">
      <span className="ml-[15px] w-[307px] text-[56px] font-black leading-none text-[#14148c]">公式指标网</span>
      <svg width="80" height="80" viewBox="0 0 80 80" className="flex-none">
        <path d="M5 40A35 35 0 0 1 75 40" fill="none" stroke="#d8604a" strokeWidth="8" />
        <path d="M75 46A35 35 0 0 1 42 77" fill="none" stroke="#e8c84a" strokeWidth="8" />
        <path id="wm-arc" d="M6 48A35 35 0 0 0 36 76" fill="none" />
        <text fontSize="7" fill="#fff"><textPath href="#wm-arc">www.9m8.cn</textPath></text>
        <circle cx="40" cy="7" r="3.5" fill="none" stroke="#e8c84a" strokeWidth="2" />
        <path d="M34 12h12l3 14H31z" fill="#e8c84a" />
        <rect x="24" y="26" width="32" height="50" rx="2" fill="#e8c84a" />
        <text x="40" y="58" fontSize="28" fontWeight="700" textAnchor="middle" fill="#80aad8">实</text>
      </svg>
      <span className="ml-[31px] font-['DejaVu_Serif'] text-[51px] font-bold leading-none text-white">www.9m8.cn</span>
    </div>
  );
}

export default function App() {
  return (
    <div className="relative flex h-[1395px] w-[2160px] flex-col overflow-hidden bg-black [font-family:'Liberation_Sans','Noto_Sans_CJK_SC',sans-serif]">
      <TitleBar />
      <div className="flex h-[1324px] flex-none">
        <div className="flex w-[1787px] flex-none flex-col">
          <ToolRow />
          <PriceChart />
          <SignalChart />
          <OscChart />
          <TimeAxis />
          <TabRows />
        </div>
        <QuotePanel />
        <SideBar />
      </div>
      <StatusBar />
      <ImeBar />
      <Watermark />
    </div>
  );
}
